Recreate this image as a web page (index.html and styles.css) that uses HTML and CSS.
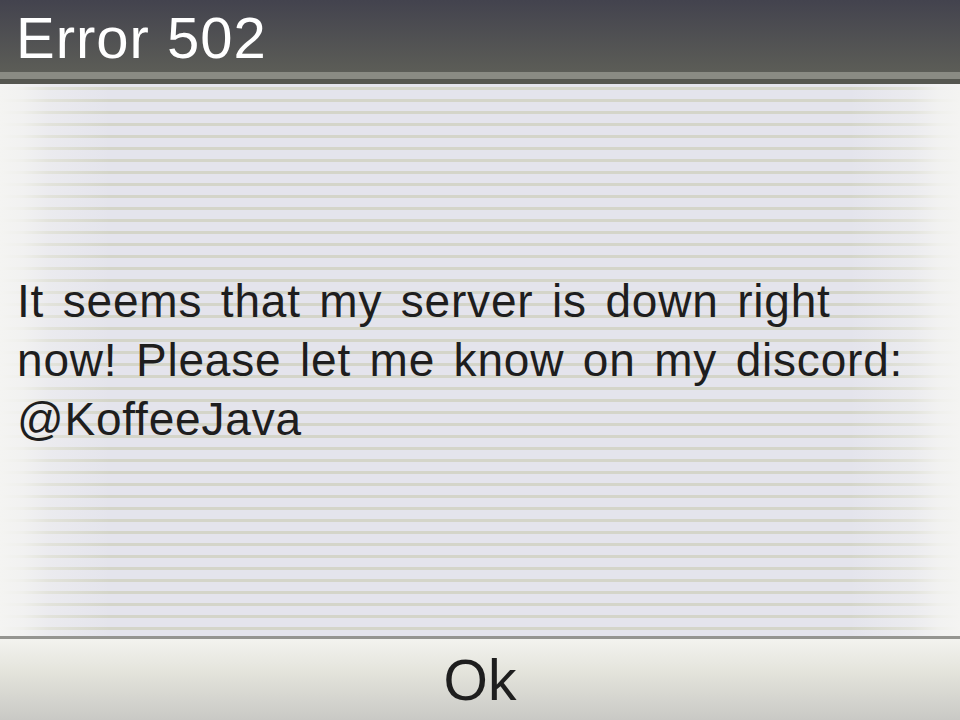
FILE: index.html
```html
<!DOCTYPE html>
<html lang="en">
<head>
    <meta charset="UTF-8">
    <meta name="viewport" content="width=device-width, initial-scale=1.0">
    <title>Error 502</title>
    <link rel="stylesheet" href="styles.css">
</head>
<body>
    <div class="screen">
        <div class="header">
            <h1>Error 502</h1>
        </div>

        <div class="content">
            <p class="message">It seems that my server is down right now! Please let me know on my discord: @KoffeeJava</p>
        </div>

        <div class="footer">
            <button class="ok-button">Ok</button>
        </div>
    </div>
</body>
</html>
```

FILE: styles.css
```css
body {
    margin: 0;
    padding: 0;
    font-family: 'Liberation Sans', Arial, sans-serif;
    background: #e4e4ec;
}

.screen {
    width: 960px;
    height: 720px;
    display: flex;
    flex-direction: column;
    overflow: hidden;
}

.header {
    height: 72px;
    background: linear-gradient(#43434e, #5c5d57);
    border-bottom: 7px solid #8a8b83;
    box-shadow: 0 5px 0 #55564f;
    position: relative;
    z-index: 1;
}

.header h1 {
    margin: 0;
    padding: 0 0 0 16px;
    color: #fff;
    font-weight: normal;
    font-size: 58px;
    line-height: 76px;
    letter-spacing: 1px;
}

.content {
    flex: 1;
    margin-top: 5px;
    display: flex;
    align-items: center;
    position: relative;
    background:
        repeating-linear-gradient(
            to bottom,
            #e4e4ec 0,
            #e4e4ec 3px,
            #d4d5c9 3px,
            #d4d5c9 6px,
            #e4e4ec 6px,
            #e4e4ec 12px
        );
}

.content::before {
    content: '';
    position: absolute;
    inset: 0;
    background: linear-gradient(
        to right,
        #f4f4f2 0,
        rgba(244, 244, 242, 0.85) 22px,
        rgba(244, 244, 242, 0.45) 48px,
        rgba(244, 244, 242, 0) 110px,
        rgba(244, 244, 242, 0) 850px,
        rgba(244, 244, 242, 0.45) 912px,
        rgba(244, 244, 242, 0.85) 938px,
        #f4f4f2 960px
    );
}

.message {
    position: relative;
    margin: 0;
    padding: 0 48px 0 17px;
    color: #1e1e1e;
    font-size: 46px;
    line-height: 59px;
    letter-spacing: 0.8px;
    word-spacing: 5px;
}

.footer {
    height: 81px;
    border-top: 3px solid #959591;
    background: linear-gradient(#f3f3ef, #e4e4dc 40%, #c9c9c5);
    display: flex;
    justify-content: center;
    align-items: center;
}

.ok-button {
    background: none;
    border: none;
    padding: 0;
    font-family: inherit;
    font-size: 57px;
    color: #1e1e1e;
    cursor: pointer;
}
```
